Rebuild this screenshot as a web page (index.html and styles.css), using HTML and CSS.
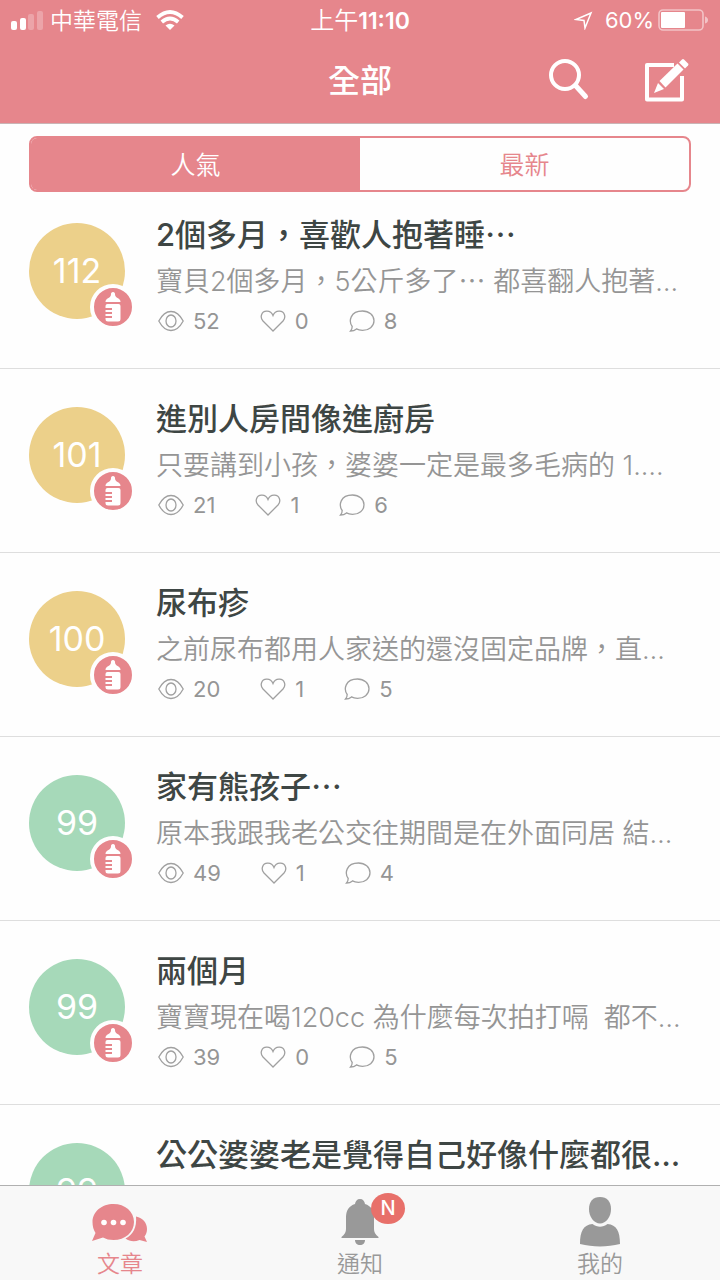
FILE: index.html
```html
<!DOCTYPE html>
<html lang="zh-Hant-TW">
<head>
<meta charset="utf-8">
<meta name="viewport" content="width=device-width, initial-scale=1">
<title>全部</title>
<link rel="stylesheet" href="styles.css">
</head>
<body>
<svg class="sprite" aria-hidden="true">
  <symbol id="eye" viewBox="0 0 26 22"><path d="M.8 11C4 5 8 1.500 13 1.500S22 5 25.200 11C22 17 18 20.500 13 20.500S4 17 .8 11Z"/><ellipse cx="13" cy="11" rx="5" ry="6"/></symbol>
  <symbol id="heart" viewBox="0 0 26 22"><path d="M13 21 3 11C-.5 7 1.500 1.500 6.500 1.200 9.500 1 12 3 13 5.500 14 3 16.500 1 19.500 1.200 24.500 1.500 26.500 7 23 11Z"/></symbol>
  <symbol id="comment" viewBox="0 0 26 22"><path d="M1.500 21C2.800 19.500 3.200 18 3.200 16.500 -.5 11.500 1 1 13.500 1 20 1 25 5.200 25 10.800S20 20.300 13.500 20.300C11 20.300 9 19.800 7.500 18.900 6 20.200 4 21 1.500 21Z"/></symbol>
  <symbol id="bottle" viewBox="0 0 38 38"><path d="M19 4c1.500 0 2 1 2 2.200 0 2 1 2.800 3 4 1.800 1.100 2.500 2 2.500 3.800h-15c0-1.800.7-2.700 2.500-3.800 2-1.200 3-2 3-4C17 5 17.500 4 19 4Z"/><path d="M13.500 16h11a2 2 0 0 1 2 2v13a2.500 2.500 0 0 1-2.500 2.500H14a2.500 2.500 0 0 1-2.500-2.500v-1H18v-2h-6.500v-2H18v-2h-6.500v-2H18v-2h-6.500v-2a2 2 0 0 1 2-2Z"/></symbol>
</svg>

<header class="top">
  <div class="status">
    <div class="status-left">
      <svg width="32" height="20" viewBox="0 0 32 20"><g fill="#fff"><rect y="11" width="6" height="9" rx="2"/><rect x="9" y="8" width="6" height="12" rx="2"/><rect x="17" y="4" width="6" height="16" rx="2" opacity=".25"/><rect x="26" y="1" width="6" height="19" rx="2" opacity=".25"/></g></svg>
      <span class="carrier">中華電信</span>
      <svg width="28" height="20" viewBox="0 0 28 20"><g fill="none" stroke="#fff" stroke-width="3.800"><path d="M1.500 7.500Q14-3.500 26.500 7.500"/><path d="M5.800 12Q14 5 22.200 12"/></g><path fill="#fff" d="M14 20 9.500 15.500Q14 12 18.500 15.500Z"/></svg>
    </div>
    <time class="clock">上午<b>11:10</b></time>
    <div class="status-right">
      <svg class="locate" width="19" height="19" viewBox="0 0 19 19"><path d="M17 2 2 8.500 10 9.500 11 17Z" fill="none" stroke="#fff" stroke-width="1.500"/></svg>
      <span>60%</span>
      <svg width="51" height="22" viewBox="0 0 51 22"><rect x="1" y="1" width="44" height="20" rx="4" fill="none" stroke="#fff" stroke-width="1.600" opacity=".5"/><rect x="3" y="3" width="24" height="16" rx="1" fill="#fff"/><path d="M47 7.500q3 1 3 3.500t-3 3.500Z" fill="#fff" opacity=".5"/></svg>
    </div>
  </div>
  <div class="bar">
    <h1>全部</h1>
    <div class="actions">
      <button aria-label="搜尋"><svg width="44" height="44" viewBox="0 0 44 44" fill="none" stroke="#fff" stroke-width="4"><circle cx="17" cy="16" r="14"/><path d="m27.500 26.500 10 11" stroke-width="5" stroke-linecap="round"/></svg></button>
      <button aria-label="發文"><svg width="44" height="44" viewBox="0 0 44 44"><path d="M29 6H2v34.500h35V17" fill="none" stroke="#fff" stroke-width="4" stroke-linejoin="round"/><g fill="#fff"><path d="m9 34 4-10 6 6Z"/><path d="M14.500 22 32.500 4.500 38.500 10.500 20.500 28.500Z"/><path d="M34 3.500 37 .5Q38-.500 39 .5L43 4.500Q44 5.500 43 6.500L40 9.500Z"/></g></svg></button>
    </div>
  </div>
</header>

<main class="feed">
  <div class="segment">
    <button class="seg active" aria-pressed="true">人氣</button>
    <button class="seg" aria-pressed="false">最新</button>
  </div>

  <article class="post">
    <div class="avatar gold">112<svg class="tag"><use href="#bottle"/></svg></div>
    <div class="body"><h2>2個多月，喜歡人抱著睡<span class="dots">…</span></h2><p>寶貝2個多月，5公斤多了<span class="dots">…</span> 都喜翻人抱著…</p>
      <div class="stats"><span><svg><use href="#eye"/></svg>52</span><span><svg><use href="#heart"/></svg>0</span><span><svg><use href="#comment"/></svg>8</span></div></div>
  </article>
  <article class="post">
    <div class="avatar gold">101<svg class="tag"><use href="#bottle"/></svg></div>
    <div class="body"><h2>進別人房間像進廚房</h2><p>只要講到小孩，婆婆一定是最多毛病的 1.…</p>
      <div class="stats"><span><svg><use href="#eye"/></svg>21</span><span><svg><use href="#heart"/></svg>1</span><span><svg><use href="#comment"/></svg>6</span></div></div>
  </article>
  <article class="post">
    <div class="avatar gold">100<svg class="tag"><use href="#bottle"/></svg></div>
    <div class="body"><h2>尿布疹</h2><p>之前尿布都用人家送的還沒固定品牌，直…</p>
      <div class="stats"><span><svg><use href="#eye"/></svg>20</span><span><svg><use href="#heart"/></svg>1</span><span><svg><use href="#comment"/></svg>5</span></div></div>
  </article>
  <article class="post">
    <div class="avatar green">99<svg class="tag"><use href="#bottle"/></svg></div>
    <div class="body"><h2>家有熊孩子<span class="dots">…</span></h2><p>原本我跟我老公交往期間是在外面同居 結…</p>
      <div class="stats"><span><svg><use href="#eye"/></svg>49</span><span><svg><use href="#heart"/></svg>1</span><span><svg><use href="#comment"/></svg>4</span></div></div>
  </article>
  <article class="post">
    <div class="avatar green">99<svg class="tag"><use href="#bottle"/></svg></div>
    <div class="body"><h2>兩個月</h2><p>寶寶現在喝120cc 為什麼每次拍打嗝&nbsp; 都不…</p>
      <div class="stats"><span><svg><use href="#eye"/></svg>39</span><span><svg><use href="#heart"/></svg>0</span><span><svg><use href="#comment"/></svg>5</span></div></div>
  </article>
  <article class="post">
    <div class="avatar green">99</div>
    <div class="body"><h2>公公婆婆老是覺得自己好像什麼都很…</h2></div>
  </article>
</main>

<nav class="tabs">
  <a class="tab current" href="#posts"><svg width="56" height="48" viewBox="0 0 56 48"><path d="M44 17.500c7 1.500 11 6.500 11 12.500 0 3-1 5.500-2.500 7.500L55 43l-7.500-2c-5 2-10 1.500-14-1.500C41 36 45 28 44 17.500Z" fill="currentColor"/><path d="M21.500 5C33 5 42 12.500 42 23s-9 18-20.500 18c-4 0-7.500-.8-10.500-2.500L0 42l3.500-8C1.500 31 .500 27 .500 23 .500 12.500 10 5 21.500 5Z" fill="currentColor"/><g fill="#fff"><circle cx="12" cy="23.500" r="2.800"/><circle cx="21.500" cy="23.500" r="2.800"/><circle cx="31" cy="23.500" r="2.800"/></g></svg>文章</a>
  <a class="tab" href="#notices"><span class="icon"><svg width="38" height="48" viewBox="0 0 38 48" fill="currentColor"><path d="M19 0c3 0 4.500 2 5 5 6 2 9 6.500 9 13v12c0 3 1 5 4.500 8v1h-37v-1C4 35 5 33 5 30V18C5 11.500 8 7 14 5c.5-3 2-5 5-5Z"/><path d="M14 41h10c0 3-2 5-5 5s-5-2-5-5Z"/></svg><span class="badge">N</span></span>通知</a>
  <a class="tab" href="#me"><svg width="42" height="50" viewBox="0 0 42 50" fill="currentColor"><path d="M21 0c7 0 11 4.500 11 12 0 8-5 14.500-11 14.500S10 20 10 12C10 4.500 14 0 21 0Z"/><path d="M13.500 27c5 3.500 10 3.500 15 0 9 1 12.500 7 12.500 20-13 3.300-27 3.300-40 0 0-13 3.500-19 12.500-20Z"/></svg>我的</a>
</nav>
</body>
</html>
```
FILE: styles.css
```css
* { box-sizing: border-box; }
:root { --pink: #e6868c; --sans: Inter, "Noto Sans CJK TC", sans-serif; }
body {
  margin: 0;
  height: 100vh;
  display: flex;
  flex-direction: column;
  overflow: hidden;
  background: #fefefe;
  font-family: var(--sans);
}
h1, h2, p { margin: 0; }
button { font: inherit; border: 0; padding: 0; background: none; color: inherit; }
svg { display: block; flex: none; }
.sprite { position: absolute; width: 0; height: 0; }

.top { flex: none; background: var(--pink); color: #fff; border-bottom: 1px solid #c9b4b5; }
.status {
  display: grid;
  grid-template-columns: 1fr auto 1fr;
  align-items: center;
  height: 40px;
  padding: 0 11px;
  font-size: 22px;
}
.status-left, .status-right { display: flex; align-items: center; gap: 7px; }
.status-right { justify-content: flex-end; gap: 4px; }
.locate { margin-right: 8px; }
.carrier { font-size: 23px; font-weight: 350; margin-right: 7px; padding-bottom: 3px; }
.clock { font-size: 24px; font-weight: 350; padding-bottom: 3px; }
.clock b { font-size: 23px; font-weight: 600; }
.bar { display: grid; grid-template-columns: 1fr auto 1fr; align-items: center; height: 83px; padding: 0 31px 2px; }
.bar h1 { grid-column: 2; font-size: 32px; line-height: 40px; font-weight: 500; }
.actions { display: flex; justify-content: flex-end; gap: 53px; }
.actions svg { overflow: visible; }

.feed { flex: 1; min-height: 0; overflow: hidden; }
.segment { display: flex; margin: 12px 29px 0; border: 2px solid var(--pink); border-radius: 8px; overflow: hidden; }
.seg { flex: 1; height: 52px; padding-bottom: 3px; font-size: 25px; color: var(--pink); font-weight: 350; }
.seg.active { background: var(--pink); color: #fff; }

.post { display: flex; gap: 31px; padding: 27px 29px 32px; border-bottom: 1px solid #dedede; }
.segment + .post { padding-top: 20px; }
.avatar {
  position: relative;
  flex: none;
  width: 96px;
  height: 96px;
  margin-top: 11px;
  border-radius: 50%;
  color: #fff;
  font-size: 34px;
  line-height: 96px;
  text-align: center;
  font-weight: 400;
}
.gold { background: #ecd08a; }
.green { background: #a6d9b9; }
.tag {
  position: absolute;
  right: -11px;
  bottom: -11px;
  width: 46px;
  height: 46px;
  border: 4px solid #fefefe;
  border-radius: 50%;
  background: var(--pink);
  fill: #fff;
}
.body { flex: 1; min-width: 0; white-space: nowrap; }
.body h2 { font-size: 31px; line-height: 46px; font-weight: 500; color: #3e4644; }
.body p { font-size: 27px; line-height: 48px; font-weight: 350; color: #959595; }
.dots { font-family: "Noto Sans CJK TC", sans-serif; line-height: 1; }
.stats { display: flex; gap: 40px; height: 30px; padding-left: 2px; font-size: 22px; color: #959595; }
.stats span { display: flex; align-items: center; gap: 9px; }
.stats svg { width: 26px; height: 22px; fill: none; stroke: #a0a0a0; stroke-width: 1.3; }

.tabs { flex: none; display: flex; height: 95px; border-top: 1px solid #b0b0b0; background: #f8f8f8; }
.tab {
  flex: 1;
  display: flex;
  flex-direction: column;
  align-items: center;
  justify-content: flex-end;
  gap: 2px;
  color: #999;
  font-size: 23px;
  font-weight: 350;
  line-height: 31px;
  text-decoration: none;
}
.tab.current { color: var(--pink); }
.icon { position: relative; }
.badge {
  position: absolute;
  left: 30px;
  top: -6px;
  width: 34px;
  height: 31px;
  border-radius: 50%;
  background: #e8706a;
  color: #fff;
  font-size: 20px;
  font-weight: 500;
  line-height: 31px;
  text-align: center;
}
```
